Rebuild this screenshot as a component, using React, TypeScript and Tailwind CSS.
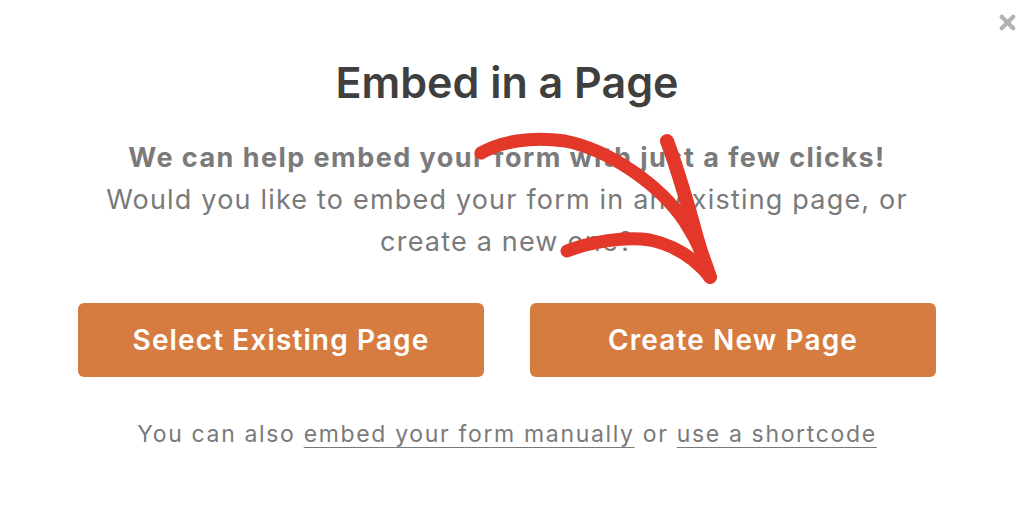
import { X } from 'lucide-react';

function HandArrow() {
  return (
    <svg
      className="pointer-events-none absolute inset-0"
      width="1024"
      height="506"
      viewBox="0 0 1024 506"
      fill="none"
    >
      <g stroke="#e3372a" strokeLinecap="round" strokeLinejoin="round">
        {/* main curve */}
        <path
          d="M481 153 C 500 142, 530 136, 565 141 C 610 150, 660 185, 685 222 C 698 242, 706 262, 710 277"
          strokeWidth="13"
        />
        {/* right arm */}
        <path d="M667 141 C 676 165, 688 205, 697 238 C 702 255, 706 268, 710 277" strokeWidth="14" />
        {/* lower arm */}
        <path d="M567 251 C 590 242, 625 236, 650 240 C 678 246, 698 262, 710 277" strokeWidth="13" />
      </g>
    </svg>
  );
}

export default function App() {
  return (
    <div className="relative h-[506px] w-full overflow-hidden bg-white font-['Inter',sans-serif]">
      {/* Close */}
      <button className="absolute right-[5px] top-[11px] text-[#b3b3b3]">
        <X size={23} strokeWidth={4.5} />
      </button>

      <div className="ml-[78px] flex w-[858px] flex-col items-center pt-[56px] text-center">
        <h1 className="text-[43px] font-semibold leading-[52px] text-[#3f3f3f]">Embed in a Page</h1>

        <div className="mt-[29px] text-[27px] leading-[42px] tracking-[0.044em] text-[#7a7a7a]">
          <p className="font-bold tracking-[0.054em]">We can help embed your form with just a few clicks!</p>
          <p>Would you like to embed your form in an existing page, or</p>
          <p>create a new one?</p>
        </div>

        <div className="mt-[40px] flex w-full gap-[46px]">
          <button className="h-[74px] flex-1 rounded-[6px] bg-[#d77c40] text-[28px] font-semibold tracking-[0.04em] text-white">
            Select Existing Page
          </button>
          <button className="h-[74px] flex-1 rounded-[6px] bg-[#d77c40] text-[28px] font-semibold tracking-[0.04em] text-white">
            Create New Page
          </button>
        </div>

        <p className="mt-[37px] text-[23px] leading-[40px] tracking-[0.072em] text-[#7a7a7a]">
          You can also{' '}
          <a className="underline decoration-1 underline-offset-[5px]">embed your form manually</a> or{' '}
          <a className="underline decoration-1 underline-offset-[5px]">use a shortcode</a>
        </p>
      </div>

      <HandArrow />
    </div>
  );
}
